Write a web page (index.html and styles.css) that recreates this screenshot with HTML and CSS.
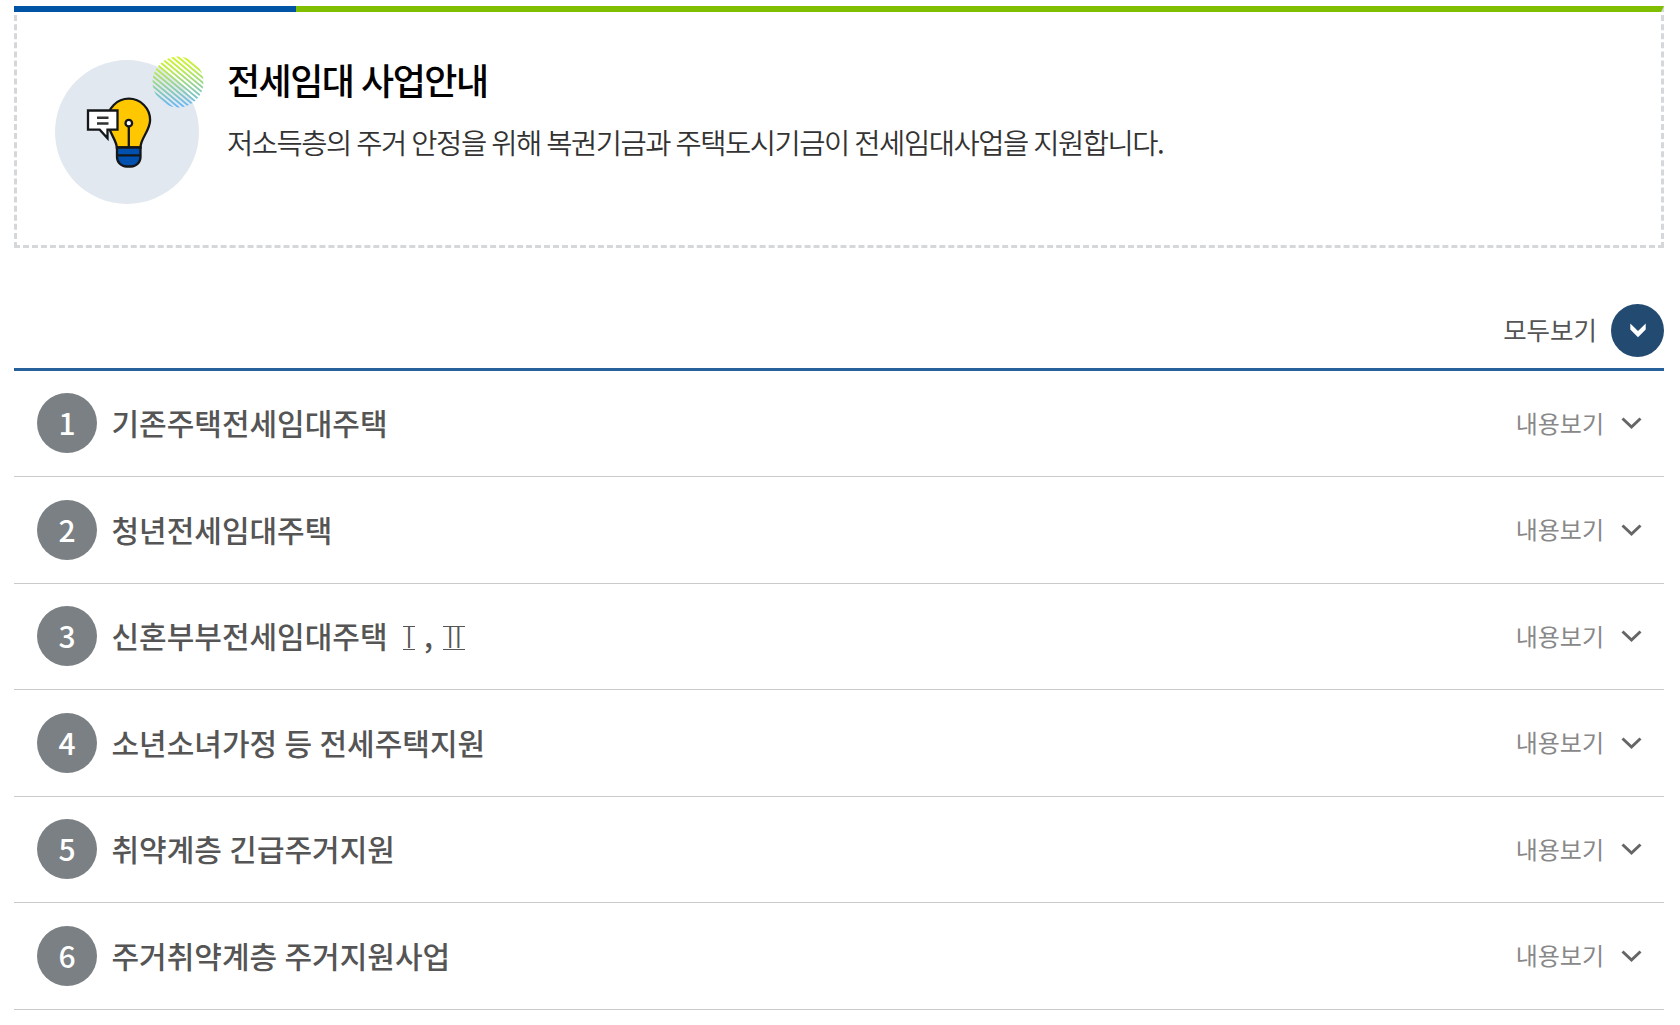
FILE: index.html
```html
<!DOCTYPE html>
<html lang="ko">
<head>
<meta charset="utf-8">
<title>전세임대 사업안내</title>
<link rel="stylesheet" href="styles.css">
</head>
<body>
<svg class="defs" width="0" height="0" aria-hidden="true">
  <symbol id="chevron" viewBox="0 0 22 14"><path d="M2.500 2.500 11.500 11 20.500 2.500" fill="none" stroke="#666" stroke-width="3"/></symbol>
</svg>
<main class="page">
  <section class="intro">
    <svg class="intro-icon" viewBox="0 0 156 156" aria-hidden="true">
      <defs>
        <linearGradient id="dots" x1="0" y1="0" x2="0" y2="1">
          <stop offset="0" stop-color="#cdf51e"/><stop offset=".25" stop-color="#bdec45"/><stop offset=".6" stop-color="#8ed0a0"/><stop offset="1" stop-color="#62b5ff"/>
        </linearGradient>
        <pattern id="hatch" width="6" height="5" patternUnits="userSpaceOnUse">
          <path d="M-6-5 12 10M-6 0 6 10M0-5 12 5" stroke="#fff" stroke-width="1.8"/>
        </pattern>
        <mask id="stripes"><circle cx="126" cy="30" r="25.5" fill="url(#hatch)"/></mask>
      </defs>
      <circle cx="75" cy="80" r="72" fill="#e2e8f0"/>
      <rect x="100" y="4" width="52" height="52" fill="url(#dots)" mask="url(#stripes)"/>
      <g stroke="#141719" stroke-width="2.300">
        <path d="M64.800 95.500C64.800 88 55.500 79 55.500 68a21.300 21.300 0 0 1 42.600 0C98 79 88.500 86 88.500 95.500z" fill="#ffc700"/>
        <path d="M65 95.500h23.500v9.500a9.500 9.500 0 0 1-9.500 9.500h-4.500a9.500 9.500 0 0 1-9.500-9.500z" fill="#0050af"/>
        <path d="M65 103.300h23.500M76.800 74v21"/>
        <circle cx="76.800" cy="71.200" r="3.300" fill="#fff"/>
        <path d="M36 58.500h29.500v19.200h-10v8.500l-7.800-8.500H36z" fill="#fff"/>
      </g>
      <path d="M45 65.800h11.500M45 71.500h11.500" stroke="#303234" stroke-width="2.500"/>
    </svg>
    <div class="intro-text">
      <h1 class="intro-title">전세임대 사업안내</h1>
      <p class="intro-desc">저소득층의 주거 안정을 위해 복권기금과 주택도시기금이 전세임대사업을 지원합니다.</p>
    </div>
  </section>

  <div class="toolbar">
    <span class="toolbar-label">모두보기</span>
    <svg class="toolbar-button" viewBox="0 0 53 53" aria-hidden="true">
      <circle cx="26.500" cy="26.500" r="26.500" fill="#234b72"/>
      <path d="M19.300 19.500 27 27 34.700 19.500V25.500L27 33.300 19.300 25.500z" fill="#fff"/>
    </svg>
  </div>

  <ol class="list">
    <li class="item"><span class="num">1</span><span class="name">기존주택전세임대주택</span><span class="more">내용보기</span><svg class="chevron"><use href="#chevron"/></svg></li>
    <li class="item"><span class="num">2</span><span class="name">청년전세임대주택</span><span class="more">내용보기</span><svg class="chevron"><use href="#chevron"/></svg></li>
    <li class="item"><span class="num">3</span><span class="name">신혼부부전세임대주택 <span class="roman">Ⅰ</span>, <span class="roman roman-two">Ⅱ</span></span><span class="more">내용보기</span><svg class="chevron"><use href="#chevron"/></svg></li>
    <li class="item"><span class="num">4</span><span class="name">소년소녀가정 등 전세주택지원</span><span class="more">내용보기</span><svg class="chevron"><use href="#chevron"/></svg></li>
    <li class="item"><span class="num">5</span><span class="name">취약계층 긴급주거지원</span><span class="more">내용보기</span><svg class="chevron"><use href="#chevron"/></svg></li>
    <li class="item"><span class="num">6</span><span class="name">주거취약계층 주거지원사업</span><span class="more">내용보기</span><svg class="chevron"><use href="#chevron"/></svg></li>
  </ol>
</main>
</body>
</html>
```
FILE: styles.css
```css
* { box-sizing: border-box; }

body {
  margin: 0;
  background: #fff;
  font-family: "Noto Sans CJK KR", sans-serif;
  overflow: hidden;
}

.defs { position: absolute; }

.page {
  width: 1650px;
  margin: 6px 0 0 14px;
}

.intro {
  position: relative;
  display: flex;
  height: 242px;
  padding: 40px 0 0 35px;
  border: 3px dashed #d5d8db;
  border-top: 6px solid #7fbf00;
}

.intro::before {
  content: "";
  position: absolute;
  top: -6px;
  left: -3px;
  width: 282px;
  height: 6px;
  background: #0054a6;
}

.intro-icon {
  flex: none;
  width: 156px;
  height: 156px;
}

.intro-text {
  padding-left: 19px;
  word-spacing: -1px;
}

.intro-title {
  margin: 0;
  font-size: 36px;
  line-height: 54px;
  font-weight: 500;
  letter-spacing: -1.5px;
  color: #000;
}

.intro-desc {
  margin: 15px 0 0;
  font-size: 28.5px;
  line-height: 42px;
  font-weight: 350;
  letter-spacing: -1.46px;
  color: #333;
}

.toolbar {
  display: flex;
  justify-content: flex-end;
  align-items: center;
  height: 53px;
  margin-top: 56px;
}

.toolbar-label {
  margin: 0 14px 3px 0;
  font-size: 25.5px;
  line-height: 38px;
  color: #555;
}

.toolbar-button {
  width: 53px;
  height: 53px;
}

.list {
  margin: 10.5px 0 0;
  padding: 0;
  list-style: none;
  border-top: 3px solid #26619c;
}

.item {
  display: flex;
  align-items: center;
  height: 106.5px;
  padding: 0 22px 0 23px;
  border-bottom: 1px solid #c8cacc;
}

.num {
  width: 60px;
  height: 60px;
  border-radius: 50%;
  background: #7b8084;
  color: #fff;
  font-size: 30px;
  line-height: 58px;
  font-weight: 500;
  text-align: center;
}

.name {
  margin: 0 0 1px 14.5px;
  font-size: 30px;
  line-height: 45px;
  font-weight: 500;
  word-spacing: -1px;
  color: #555;
}

/* Roman numerals carry thin slab serifs above and below the stems */
.roman {
  position: relative;
  display: inline-block;
  margin: 0 0 0 -1px;
  font-weight: 300;
}

.roman::after {
  content: "";
  position: absolute;
  top: 13px;
  left: calc(50% - 6px);
  width: 12px;
  height: 22px;
  border: solid #555;
  border-width: 1.5px 0;
}

.roman-two::after {
  left: calc(50% - 11px);
  width: 22px;
}

.more {
  margin: 0 0 1px auto;
  font-size: 24px;
  line-height: 36px;
  color: #888;
}

.chevron {
  width: 22px;
  height: 14px;
  margin-left: 16px;
}
```
